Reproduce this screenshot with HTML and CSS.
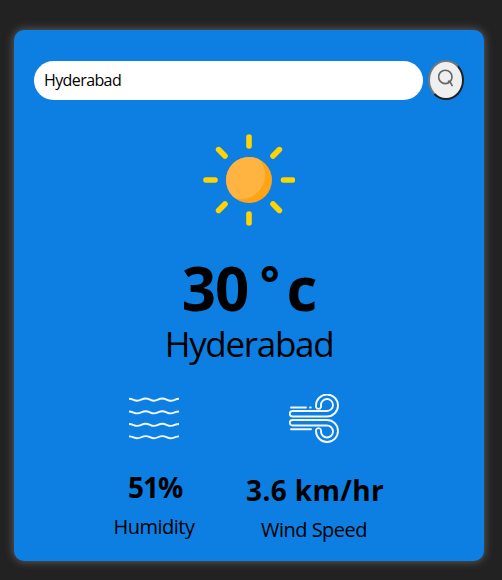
FILE: index.html
```html
<!DOCTYPE html>
<html lang="en">
<head>
<meta charset="utf-8">
<title>Weather</title>
<link rel="stylesheet" href="styles.css">
</head>
<body>
<main class="card">
  <div class="search">
    <input class="search-input" type="text" value="Hyderabad" aria-label="City">
    <button class="search-button" aria-label="Search">
      <svg class="search-icon" width="16" height="20" viewBox="0 0 16 20" fill="none" stroke="#666" stroke-width="1.600"><circle cx="7.300" cy="7.900" r="6.700"/><path d="M9.800 12.300h2l2.600 4.900"/></svg>
    </button>
  </div>
  <section class="weather">
    <svg class="sun" width="92" height="92" viewBox="0 0 92 92">
      <defs><clipPath id="disc"><circle cx="46" cy="46" r="23"/></clipPath></defs>
      <circle cx="46" cy="46" r="23" fill="#ffa414"/>
      <circle cx="38" cy="41" r="24" fill="#ffb341" clip-path="url(#disc)"/>
      <g stroke="#ffd400" stroke-width="5.600" stroke-linecap="round">
        <path d="M46 3v9M46 80v9M3 46h9M80.500 46h9M15.600 15.600l6.400 6.400M70 70l6.400 6.400M76.400 15.600L70 22M22 70l-6.400 6.400"/>
      </g>
    </svg>
    <h1 class="temp">30<span class="degree">°</span>c</h1>
    <h2 class="city">Hyderabad</h2>
  </section>
  <section class="details">
    <div class="humidity">
      <svg class="detail-icon" width="50" height="50" viewBox="0 0 50 50" fill="none" stroke="#f3f8fe" stroke-width="1.900">
        <path d="M0 4.800C4 4.800 5 6.700 8.300 6.700S13 4.500 16.700 4.500S21.500 6.700 25 6.700S29.500 4.500 33.300 4.500S38 6.700 41.700 6.700S46 4.800 50 4.800"/>
        <path d="M0 17.500C4 17.500 5 19.400 8.300 19.400S13 17.200 16.700 17.200S21.500 19.400 25 19.400S29.500 17.200 33.300 17.200S38 19.400 41.700 19.400S46 17.500 50 17.500"/>
        <path d="M0 30C4 30 5 31.900 8.300 31.900S13 29.700 16.700 29.700S21.500 31.900 25 31.900S29.500 29.700 33.300 29.700S38 31.900 41.700 31.900S46 30 50 30"/>
        <path d="M0 42.400C4 42.400 5 44.300 8.300 44.300S13 42.100 16.700 42.100S21.500 44.300 25 44.300S29.500 42.100 33.300 42.100S38 44.300 41.700 44.300S46 42.400 50 42.400"/>
      </svg>
      <p class="value value-humidity">51%</p>
      <p class="label label-humidity">Humidity</p>
    </div>
    <div class="wind">
      <svg class="detail-icon" width="50" height="50" viewBox="0 0 50 50" fill="none" stroke="#f3f8fe" stroke-width="1.900" stroke-linecap="round">
        <path d="M3.500 17H38A6 6 0 1 0 32 11.500V13A2.600 2.600 0 0 1 27 13V11.500A11 11 0 1 1 38 22.500H3.500A2.750 2.750 0 0 1 3.500 17Z"/>
        <path d="M3.500 31.500H38A6 6 0 1 1 32 37.500V36A2.600 2.600 0 0 0 27 36V37.500A11 11 0 1 0 38 26H3.500A2.750 2.750 0 0 0 3.500 31.500Z"/>
        <path d="M2 13.500H17M21 13.500h.8M2 35.300H22"/>
      </svg>
      <p class="value value-wind">3.6 km/hr</p>
      <p class="label label-wind">Wind Speed</p>
    </div>
  </section>
</main>
</body>
</html>
```
FILE: styles.css
```css
* { box-sizing: border-box; margin: 0; }
body {
  height: 580px;
  padding: 30px 18px 19px 14px;
  overflow: hidden;
  background: #222;
  color: #000;
  font-family: "Trebuchet MS", "Open Sans", "Noto Sans", sans-serif;
}
.card {
  width: 470px;
  height: 531px;
  padding: 30px 20px 0;
  border-radius: 10px;
  background: #0d7fe3;
  box-shadow: 0 0 10px #666;
}
.search { display: flex; align-items: center; gap: 5px; height: 40px; }
.search-input {
  width: 389px;
  height: 39px;
  margin-top: 1px;
  padding: 0 10px 2px;
  border: 0;
  border-radius: 20px;
  outline: 0;
  background: #fff;
  color: #000;
  font: 16px "Trebuchet MS", "Open Sans", sans-serif;
  letter-spacing: -0.6px;
}
.search-button {
  display: flex;
  width: 36px;
  height: 40px;
  padding: 7px 0 0 8px;
  border: 2px solid;
  border-color: #767676 #212121 #212121 #767676;
  border-radius: 50%;
  background: #efefef;
}
.search-icon { flex: none; }
.weather { display: flex; flex-direction: column; align-items: center; }
.sun { margin-top: 34px; }
.temp {
  display: flex;
  margin-top: 27px;
  font-size: 60px;
  font-weight: 700;
  line-height: 70px;
  letter-spacing: -1px;
}
.degree { width: 38px; padding-left: 4px; text-align: center; font-size: 46px; line-height: 58px; }
.city { font-size: 35px; font-weight: 400; line-height: 42px; letter-spacing: -1.3px; }
.details { display: flex; margin-top: 29px; text-align: center; }
.humidity { width: 240px; }
.wind { width: 80px; display: flex; flex-direction: column; align-items: center; white-space: nowrap; }
.detail-icon { display: block; margin: 0 auto; }
.value { margin-top: 25px; font-size: 28px; font-weight: 700; line-height: 36px; letter-spacing: 0.35px; }
.value-humidity { padding-left: 2px; letter-spacing: -1px; }
.value-wind { margin-top: 28px; padding-left: 2px; }
.label { margin-top: 7px; font-size: 20px; line-height: 30px; letter-spacing: -0.5px; }
```
